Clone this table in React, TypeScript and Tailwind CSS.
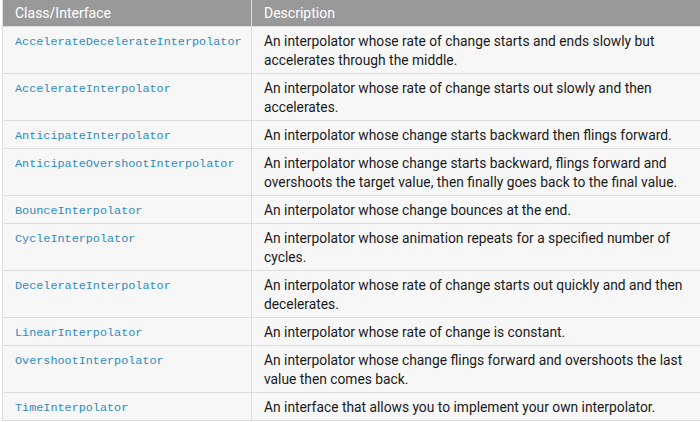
const rows: [string, string][] = [
  ["AccelerateDecelerateInterpolator", "An interpolator whose rate of change starts and ends slowly but accelerates through the middle."],
  ["AccelerateInterpolator", "An interpolator whose rate of change starts out slowly and then accelerates."],
  ["AnticipateInterpolator", "An interpolator whose change starts backward then flings forward."],
  ["AnticipateOvershootInterpolator", "An interpolator whose change starts backward, flings forward and overshoots the target value, then finally goes back to the final value."],
  ["BounceInterpolator", "An interpolator whose change bounces at the end."],
  ["CycleInterpolator", "An interpolator whose animation repeats for a specified number of cycles."],
  ["DecelerateInterpolator", "An interpolator whose rate of change starts out quickly and and then decelerates."],
  ["LinearInterpolator", "An interpolator whose rate of change is constant."],
  ["OvershootInterpolator", "An interpolator whose change flings forward and overshoots the last value then comes back."],
  ["TimeInterpolator", "An interface that allows you to implement your own interpolator."],
];

export default function App() {
  return (
    <div className="w-[700px] h-[422px] bg-white overflow-hidden font-['Roboto',sans-serif]">
      <div className="ml-[2px] w-[698px] border-l border-b border-[#dddddd] bg-[#f7f7f7]">
        <div className="flex h-[26px] bg-[#999999] text-white text-[14px] leading-[26px]">
          <div className="w-[249px] shrink-0 pl-[12px] border-r border-[#dddddd]">Class/Interface</div>
          <div className="flex-1 pl-[12px]">Description</div>
        </div>
        {rows.map(([name, desc]) => (
          <div key={name} className="flex border-t border-[#dddddd]">
            <div className="w-[249px] shrink-0 pl-[12px] pt-[6px] pb-[2px] border-r border-[#dddddd] font-['Liberation_Mono',monospace] text-[11.8px] leading-[19px] text-[#2e8bc0]">
              {name}
            </div>
            <div className="flex-1 pl-[12px] pr-[4px] pt-[5px] pb-[3px] text-[13.8px] leading-[19px] text-[#1a1a1a]">
              {desc}
            </div>
          </div>
        ))}
      </div>
    </div>
  );
}
